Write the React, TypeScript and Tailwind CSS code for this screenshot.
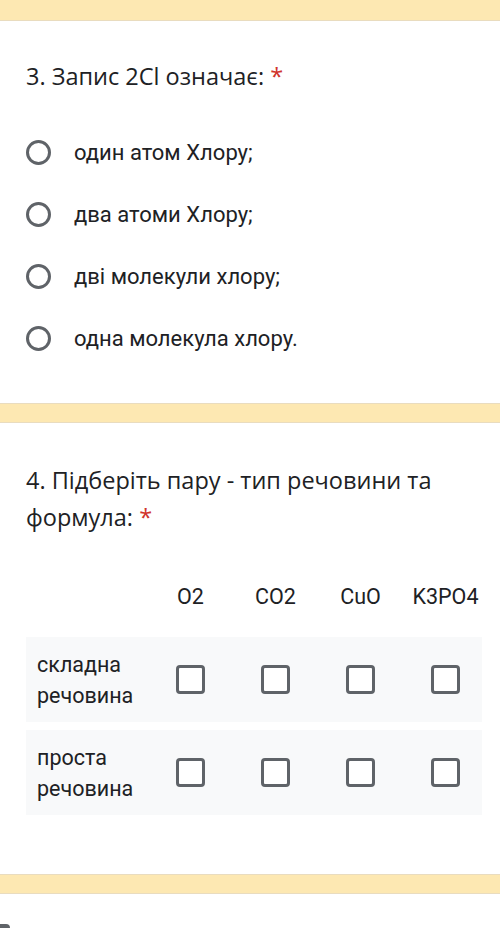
const options = ["один атом Хлору;", "два атоми Хлору;", "дві молекули хлору;", "одна молекула хлору."]
const columns = ["O2", "CO2", "CuO", "K3PO4"]
const rows = [
  ["складна", "речовина"],
  ["проста", "речовина"],
]

function Band() {
  return <div className="h-[20px] shrink-0 border-y border-[#e9dcbf] bg-[#fde8b2]" />
}

function Radio() {
  return <span className="h-[25px] w-[25px] shrink-0 rounded-full border-[3px] border-[#5f6368]" />
}

function Checkbox() {
  return <span className="h-[29px] w-[29px] rounded-[4px] border-[3px] border-[#5f6368] bg-white" />
}

export default function App() {
  return (
    <div className="flex h-[928px] w-[500px] flex-col overflow-hidden bg-white text-[#202124]">
      <div className="h-[21px] shrink-0 border-b border-[#e9dcbf] bg-[#fde8b2]" />

      {/* Question 3 */}
      <section className="flex h-[382px] shrink-0 flex-col px-[26px] pt-[41px]">
        <h2 className="font-['Open_Sans',sans-serif] text-[23.5px] leading-[28px]">
          3. Запис 2Cl означає: <span className="text-[#d0342c]">*</span>
        </h2>
        <ul className="mt-[31px] flex flex-col">
          {options.map((o) => (
            <li key={o} className="flex h-[62px] items-center gap-[23px] font-['Roboto',sans-serif] text-[22px]">
              <Radio />
              <span>{o}</span>
            </li>
          ))}
        </ul>
      </section>

      <Band />

      {/* Question 4 */}
      <section className="flex h-[451px] shrink-0 flex-col px-[26px] pt-[39px]">
        <h2 className="font-['Open_Sans',sans-serif] text-[23.5px] leading-[37px]">
          4. Підберіть пару - тип речовини та формула: <span className="text-[#d0342c]">*</span>
        </h2>
        <div className="mt-[41px] grid h-[40px] w-[456px] grid-cols-[122px_repeat(4,85px)] items-center font-['Roboto',sans-serif] text-[21.5px]">
          <span />
          {columns.map((c) => (
            <span key={c} className="whitespace-nowrap text-center">
              {c}
            </span>
          ))}
        </div>
        <div className="mt-[20px] flex flex-col gap-[8px] font-['Roboto',sans-serif] text-[21.5px]">
          {rows.map((r, i) => (
            <div key={i} className="grid h-[85px] w-[456px] grid-cols-[122px_repeat(4,85px)] items-center overflow-hidden bg-[#f8f9fa]">
              <span className="pl-[11px] leading-[31px]">
                {r[0]}
                <br />
                {r[1]}
              </span>
              {columns.map((c) => (
                <span key={c} className="flex justify-center">
                  <Checkbox />
                </span>
              ))}
            </div>
          ))}
        </div>
      </section>

      <Band />

      <section className="flex-1">
        <span className="mt-[30px] block h-[6px] w-[10px] rounded-tr-[4px] bg-[#5f6368]" />
      </section>
    </div>
  )
}
